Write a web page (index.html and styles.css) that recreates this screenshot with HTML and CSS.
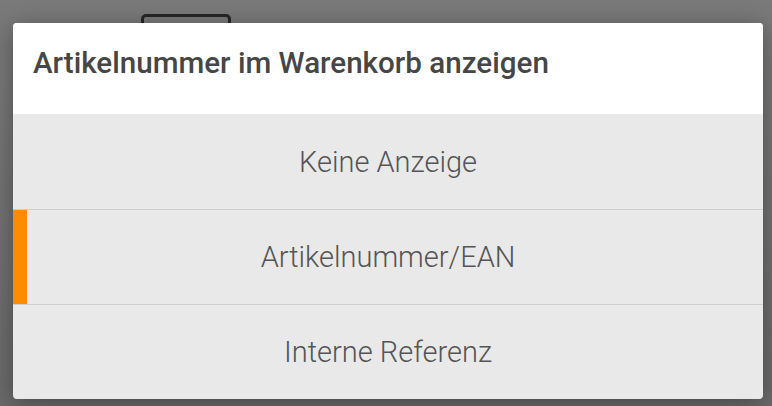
FILE: index.html
```html
<!DOCTYPE html>
<html lang="de">
<head>
<meta charset="utf-8">
<link rel="stylesheet" href="styles.css">
</head>
<body>
<div class="backdrop">
  <div class="behind"></div>
  <div class="dialog">
    <div class="dialog-header">Artikelnummer im Warenkorb anzeigen</div>
    <div class="options">
      <div class="option">Keine Anzeige</div>
      <div class="option selected">Artikelnummer/EAN</div>
      <div class="option">Interne Referenz</div>
    </div>
  </div>
</div>
</body>
</html>
```
FILE: styles.css
```css
html, body {
  margin: 0;
  padding: 0;
  width: 772px;
  height: 406px;
  overflow: hidden;
  background: #727272;
}
.backdrop {
  position: relative;
  width: 772px;
  height: 406px;
  background: linear-gradient(#7a7a7a, #6a6a6a);
  padding-top: 23px;
  box-sizing: border-box;
}
.behind {
  position: absolute;
  left: 141px;
  top: 14px;
  width: 90px;
  height: 30px;
  border: 3px solid #262626;
  border-radius: 5px;
  box-sizing: border-box;
}
.dialog {
  position: relative;
  margin-left: 13px;
  width: 750px;
  border-radius: 4px;
  overflow: hidden;
  background: #e9e9e9;
  box-shadow: 0 4px 24px rgba(0,0,0,0.35);
  font-family: Roboto, "Liberation Sans", sans-serif;
}
.dialog-header {
  background: #fff;
  height: 91px;
  box-sizing: border-box;
  padding: 23px 20px 0 20px;
  font-size: 29.6px;
  font-weight: 500;
  color: #464646;
  line-height: 34.5px;
}
.option {
  position: relative;
  height: 94px;
  display: flex;
  align-items: center;
  justify-content: center;
  font-size: 29px;
  font-weight: 300;
  color: #555;
  border-bottom: 1px solid #cfcfcf;
}
.option:first-child { height: 95px; }
.option:last-child { border-bottom: none; }
.option.selected::before {
  content: "";
  position: absolute;
  left: 0;
  top: 0;
  bottom: 0;
  width: 14px;
  background: #ff8c00;
}
```
